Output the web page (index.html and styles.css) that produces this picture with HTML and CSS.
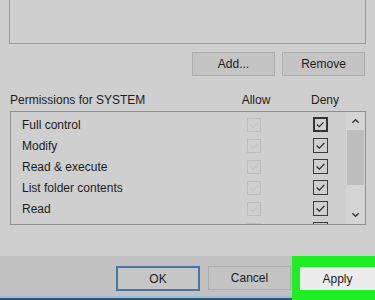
FILE: index.html
```html
<!DOCTYPE html>
<html>
<head>
<meta charset="utf-8">
<link rel="stylesheet" href="styles.css">
</head>
<body>
<div class="page">
  <div class="top-box"></div>
  <div class="btn-row">
    <div class="btn">Add...</div>
    <div class="btn">Remove</div>
  </div>
  <div class="perm-header">
    <span class="perm-title">Permissions for SYSTEM</span>
    <span class="col-head">Allow</span>
    <span class="col-head">Deny</span>
  </div>
  <div class="perm-list">
    <div class="rows">
      <div class="row"><span class="label">Full control</span><span class="cb allow"><svg viewBox="0 0 14 14"><path d="M3 7 L6 10 L11.5 4"/></svg></span><span class="cb deny focus"><svg viewBox="0 0 15 15"><path d="M2.5 7.5 L5.8 10.5 L11.5 4.5"/></svg></span></div>
      <div class="row"><span class="label">Modify</span><span class="cb allow"><svg viewBox="0 0 14 14"><path d="M3 7 L6 10 L11.5 4"/></svg></span><span class="cb deny"><svg viewBox="0 0 15 15"><path d="M3 7.5 L6.2 10.5 L12 4.5"/></svg></span></div>
      <div class="row"><span class="label">Read &amp; execute</span><span class="cb allow"><svg viewBox="0 0 14 14"><path d="M3 7 L6 10 L11.5 4"/></svg></span><span class="cb deny"><svg viewBox="0 0 15 15"><path d="M3 7.5 L6.2 10.5 L12 4.5"/></svg></span></div>
      <div class="row"><span class="label">List folder contents</span><span class="cb allow"><svg viewBox="0 0 14 14"><path d="M3 7 L6 10 L11.5 4"/></svg></span><span class="cb deny"><svg viewBox="0 0 15 15"><path d="M3 7.5 L6.2 10.5 L12 4.5"/></svg></span></div>
      <div class="row"><span class="label">Read</span><span class="cb allow"><svg viewBox="0 0 14 14"><path d="M3 7 L6 10 L11.5 4"/></svg></span><span class="cb deny"><svg viewBox="0 0 15 15"><path d="M3 7.5 L6.2 10.5 L12 4.5"/></svg></span></div>
      <div class="row"><span class="label"></span><span class="cb allow"><svg viewBox="0 0 14 14"><path d="M3 7 L6 10 L11.5 4"/></svg></span><span class="cb deny"><svg viewBox="0 0 15 15"><path d="M3 7.5 L6.2 10.5 L12 4.5"/></svg></span></div>
    </div>
    <div class="scrollbar">
      <div class="arrow"><svg viewBox="0 0 10 6"><path d="M1.5 5 L5 1.5 L8.5 5"/></svg></div>
      <div class="thumb"></div>
      <div class="track"></div>
      <div class="arrow"><svg viewBox="0 0 10 6"><path d="M1.5 1 L5 4.5 L8.5 1"/></svg></div>
    </div>
  </div>
  <div class="spacer"></div>
  <div class="footer">
    <div class="btn ok">OK</div>
    <div class="btn cancel">Cancel</div>
    <div class="highlight"><div class="btn apply">Apply</div></div>
  </div>
</div>
</body>
</html>
```
FILE: styles.css
```css
html, body {
  margin: 0;
  padding: 0;
  background: #cfcfcf;
}
body {
  font-family: "Liberation Sans", Arial, sans-serif;
  font-size: 12px;
  color: #1c1c1c;
}
.page {
  width: 375px;
  height: 300px;
  display: flex;
  flex-direction: column;
  overflow: hidden;
}
.top-box {
  height: 43px;
  margin: 0 9px;
  border: 1px solid #9c9c9c;
  border-top: none;
  flex: none;
}
.btn-row {
  display: flex;
  justify-content: flex-end;
  gap: 7px;
  padding-right: 10px;
  margin-top: 8px;
  flex: none;
}
.btn {
  width: 81px;
  height: 22px;
  border: 1px solid #adadad;
  background: #c4c4c4;
  display: flex;
  align-items: center;
  justify-content: center;
  flex: none;
}
.perm-header {
  display: flex;
  align-items: center;
  height: 16px;
  margin-top: 16px;
  padding-left: 10px;
  padding-right: 30px;
  flex: none;
}
.perm-title {
  flex: 1;
}
.col-head {
  width: 40px;
  text-align: center;
}
.col-head + .col-head {
  margin-left: 29px;
}
.perm-list {
  margin: 3px 9px 0 10px;
  height: 112px;
  border: 1px solid #8e8e8e;
  display: flex;
  overflow: hidden;
  flex: none;
}
.rows {
  flex: 1;
  padding-top: 2px;
  overflow: hidden;
}
.row {
  height: 21px;
  display: flex;
  align-items: center;
  padding-left: 11px;
  padding-right: 18px;
}
.label {
  flex: 1;
}
.cb {
  display: block;
  box-sizing: border-box;
  flex: none;
}
.cb svg {
  display: block;
  width: 100%;
  height: 100%;
  fill: none;
}
.allow {
  width: 14px;
  height: 14px;
  border: 1px solid #bcbcbc;
}
.allow svg path {
  stroke: #bdbdbd;
  stroke-width: 1;
}
.deny {
  width: 15px;
  height: 15px;
  margin-left: 52px;
  border: 1px solid #3a3a3a;
}
.deny.focus {
  border-width: 2px;
  border-color: #333;
}
.deny svg path {
  stroke: #2a2a2a;
  stroke-width: 1.5;
}
.scrollbar {
  width: 19px;
  display: flex;
  flex-direction: column;
  background: #d5d5d5;
  flex: none;
}
.arrow {
  height: 18px;
  display: flex;
  align-items: center;
  justify-content: center;
  flex: none;
}
.arrow svg {
  width: 9px;
  height: 6px;
  fill: none;
}
.arrow svg path {
  stroke: #3a3a3a;
  stroke-width: 1.6;
}
.thumb {
  height: 55px;
  background: #bdbdbd;
  margin: 0 1px;
  flex: none;
}
.track {
  flex: 1;
}
.spacer {
  flex: 1;
}
.footer {
  height: 44px;
  display: flex;
  align-items: flex-start;
  justify-content: flex-end;
  flex: none;
  background: linear-gradient(to bottom, #c1c1c1 0, #c1c1c1 40px, #9cc0da 40px, #9cc0da 42px, #2f5573 42px);
}
.footer .ok {
  margin-top: 10px;
  width: 80px;
  height: 21px;
  border: 2px solid #4a73a8;
  background: #c6c6c6;
}
.footer .cancel {
  margin-top: 10px;
  margin-left: 8px;
  width: 81px;
  height: 22px;
  background: #c4c4c4;
  border-color: #acacac;
}
.highlight {
  width: 75px;
  height: 33px;
  padding: 11px 0 0 8px;
  background: #1fee24;
  margin-left: 1px;
}
.highlight .apply {
  width: 75px;
  height: 23px;
  border: none;
  background: #ececec;
}
```
